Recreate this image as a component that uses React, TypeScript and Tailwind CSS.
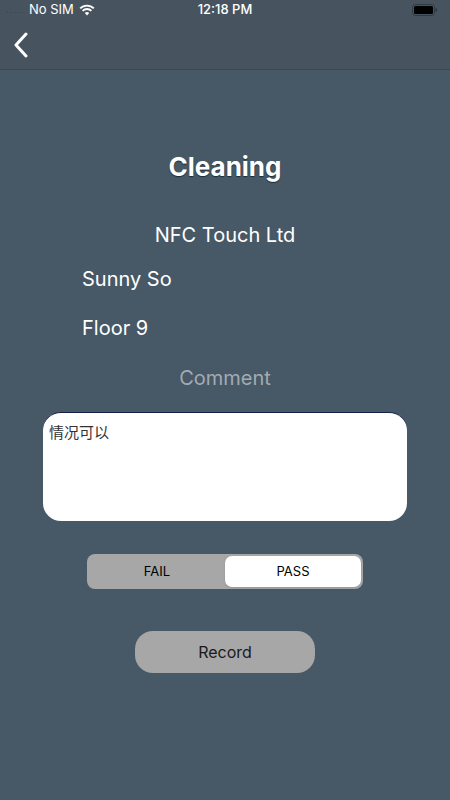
import { useState } from 'react'

function Wifi() {
  return (
    <svg width="16" height="12" viewBox="0 0 16 12" className="ml-[5px]">
      <path d="M8 11.5 L10.2 9.1 A3.2 3.2 0 0 0 5.8 9.1 Z" fill="white" />
      <path d="M3.6 6.9 A6.2 6.2 0 0 1 12.4 6.9" stroke="white" strokeWidth="1.9" fill="none" />
      <path d="M1.2 4.4 A9.6 9.6 0 0 1 14.8 4.4" stroke="white" strokeWidth="1.9" fill="none" />
    </svg>
  )
}

function Battery() {
  return (
    <svg width="26" height="12" viewBox="0 0 26 12">
      <rect x="0.5" y="0.5" width="22" height="11" rx="3" fill="none" stroke="#1f2a33" strokeOpacity="0.6" />
      <rect x="2" y="2" width="19" height="8" rx="1.5" fill="black" />
      <rect x="23.5" y="4" width="1.5" height="4" rx="0.7" fill="#1f2a33" fillOpacity="0.6" />
    </svg>
  )
}

export default function App() {
  const [pass, setPass] = useState(true)

  return (
    <div className="flex h-[800px] w-[450px] flex-col bg-[#475866] font-['Inter','Noto_Sans_CJK_SC',sans-serif] text-white">
      <div className="h-[70px] border-b border-[#3a4650] bg-[#47545f]">
        <div className="relative flex h-[20px] items-center px-[6px] text-[13px]">
          <span className="text-[8px] leading-none tracking-[1.5px] text-[#2f3b45]">.....</span>
          <span className="ml-[4px]">No SIM</span>
          <Wifi />
          <span className="absolute left-1/2 -translate-x-1/2 font-medium">12:18 PM</span>
          <span className="ml-auto mr-[6px] flex">
            <Battery />
          </span>
        </div>
        <div className="flex h-[49px] items-center pl-[13px]">
          <svg width="16" height="26" viewBox="0 0 16 26">
            <path d="M13 2 L3 13 L13 24" stroke="white" strokeWidth="3" fill="none" strokeLinecap="round" strokeLinejoin="round" />
          </svg>
        </div>
      </div>

      <div className="flex flex-col">
        <h1 className="mt-[81px] text-center text-[26px] leading-[32px] font-bold [text-shadow:0_1px_1px_#1e2a33]">Cleaning</h1>
        <p className="mt-[38px] text-center text-[20px] leading-[28px]">NFC Touch Ltd</p>
        <p className="mt-[16px] pl-[82px] text-[20px] leading-[28px]">Sunny So</p>
        <p className="mt-[21px] pl-[82px] text-[20px] leading-[28px]">Floor 9</p>
        <p className="mt-[22px] text-center text-[20px] leading-[28px] text-[#a3abb2]">Comment</p>

        <div className="mx-[43px] mt-[20px] h-[109px] rounded-[18px] border-t border-[#14204a] bg-white px-[6px] py-[10px] text-[15px] leading-[20px] text-[#333]">
          情况可以
        </div>

        <div className="mx-[87px] mt-[33px] flex h-[35px] rounded-[8px] bg-[#a7a7a7] p-[2px] text-[13px] text-black">
          <button onClick={() => setPass(false)} className={`flex-1 rounded-[7px] ${!pass ? 'bg-white shadow' : ''}`}>
            FAIL
          </button>
          <button onClick={() => setPass(true)} className={`flex-1 rounded-[7px] ${pass ? 'bg-white shadow' : ''}`}>
            PASS
          </button>
        </div>

        <button className="mx-auto mt-[42px] h-[42px] w-[180px] rounded-[18px] bg-[#a7a7a7] text-[16px] text-[#1a1a1a]">Record</button>
      </div>
    </div>
  )
}
